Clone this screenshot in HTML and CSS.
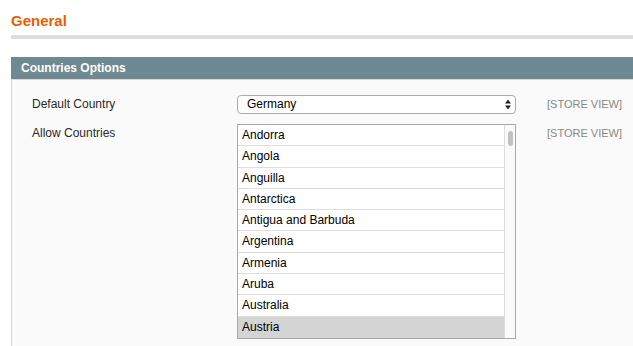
FILE: index.html
```html
<!DOCTYPE html>
<html>
<head>
<meta charset="utf-8">
<link rel="stylesheet" href="styles.css">
</head>
<body>
<div class="page">
  <h2 class="title">General</h2>
  <div class="title-bar"></div>
  <div class="section">
    <h3 class="section-head">Countries Options</h3>
    <div class="fieldset">
      <div class="form-grid">
        <div class="label">Default Country</div>
        <div class="select">
          <span class="select-value">Germany</span>
          <svg class="select-arrows" width="6" height="11" viewBox="0 0 6 11"><path d="M3 0.5 L6 4.5 H0 Z" fill="#222"/><path d="M3 10.5 L6 6.5 H0 Z" fill="#222"/></svg>
        </div>
        <div class="scope">[STORE VIEW]</div>

        <div class="label">Allow Countries</div>
        <div class="listbox">
          <ul class="options">
            <li>Andorra</li>
            <li>Angola</li>
            <li>Anguilla</li>
            <li>Antarctica</li>
            <li>Antigua and Barbuda</li>
            <li>Argentina</li>
            <li>Armenia</li>
            <li>Aruba</li>
            <li>Australia</li>
            <li class="selected">Austria</li>
          </ul>
          <div class="scrollbar"><div class="thumb"></div></div>
        </div>
        <div class="scope">[STORE VIEW]</div>
      </div>
    </div>
  </div>
</div>
</body>
</html>
```

FILE: styles.css
```css
html, body {
  margin: 0;
  padding: 0;
  background: #fff;
  overflow: hidden;
}
body {
  font-family: "Liberation Sans", Arial, Helvetica, sans-serif;
  color: #2f2f2f;
}
.page {
  padding-left: 11px;
}
.title {
  margin: 0;
  padding-top: 12px;
  font-size: 15px;
  line-height: 18px;
  font-weight: bold;
  color: #eb5e00;
}
.title-bar {
  margin-top: 5px;
  height: 4px;
  background: #dddddd;
}
.section {
  margin-top: 18px;
}
.section-head {
  margin: 0;
  height: 22px;
  line-height: 22px;
  padding-left: 10px;
  background: #6f8992;
  color: #fff;
  font-size: 12px;
  font-weight: bold;
  border-bottom: 1px solid #d6d6d6;
}
.fieldset {
  background: #fafafa;
  border-left: 1px solid #d6d6d6;
  padding: 15px 0 7px 20px;
}
.form-grid {
  display: grid;
  grid-template-columns: 205px 279px auto;
  row-gap: 10px;
  align-items: start;
}
.label {
  font-size: 12px;
  line-height: 19px;
  color: #2a2a2a;
}
.scope {
  padding-left: 31px;
  font-size: 11px;
  line-height: 19px;
  color: #888;
  white-space: nowrap;
}
.select {
  box-sizing: border-box;
  height: 19px;
  border: 1px solid #acacac;
  border-radius: 4px;
  background: #fff;
  display: flex;
  align-items: center;
  justify-content: space-between;
  padding: 0 4px 0 9px;
}
.select-value {
  font-size: 12px;
  color: #000;
  line-height: 17px;
}
.select-arrows {
  display: block;
}
.listbox {
  box-sizing: border-box;
  height: 215px;
  border: 1px solid #a9a9a9;
  background: #fff;
  display: flex;
}
.options {
  list-style: none;
  margin: 0;
  padding: 0;
  flex: 1;
}
.options li {
  box-sizing: border-box;
  height: 21.3px;
  line-height: 20.3px;
  border-bottom: 1px solid #dedede;
  padding-left: 4px;
  font-size: 12px;
  color: #000;
}
.options li.selected {
  background: #d4d4d4;
  border-bottom: none;
}
.scrollbar {
  width: 10px;
  border-left: 1px solid #dcdcdc;
  background: #fafafa;
  padding-top: 6px;
}
.thumb {
  margin-left: 3px;
  width: 5px;
  height: 15px;
  border-radius: 3px;
  background: #c2c2c2;
}
```
